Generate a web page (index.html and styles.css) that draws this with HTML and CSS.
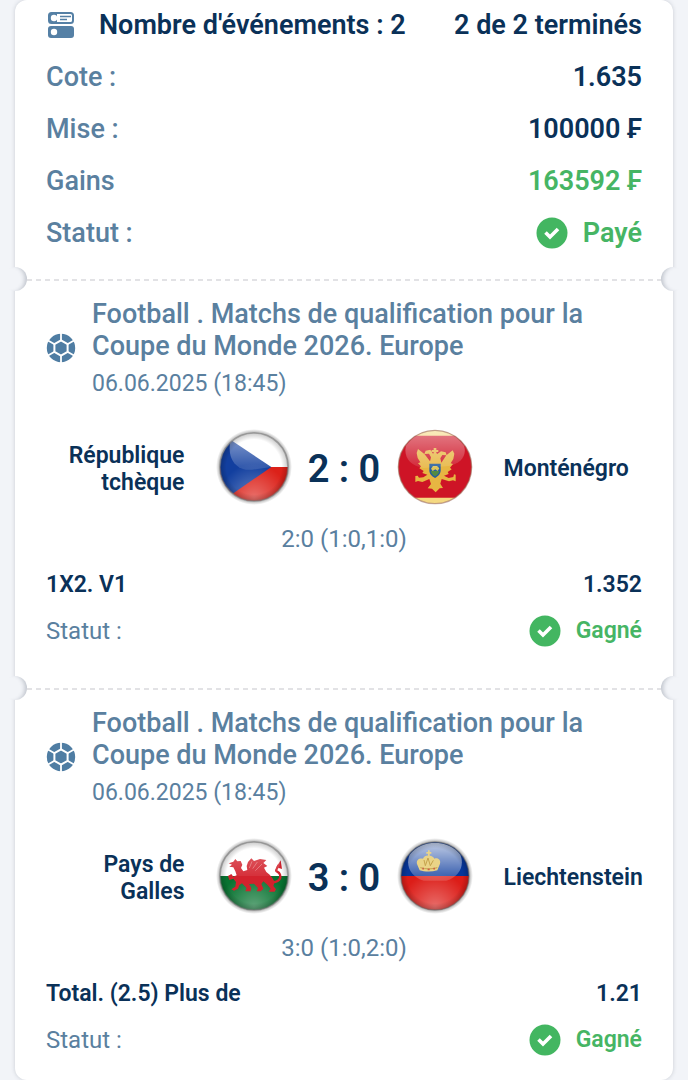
FILE: index.html
```html
<!DOCTYPE html>
<html lang="fr">
<head>
  <meta charset="UTF-8">
  <meta name="viewport" content="width=device-width, initial-scale=1.0">
  <title>Coupon</title>
  <link rel="stylesheet" href="styles.css">
</head>
<body>
  <!-- shared shapes -->
  <svg class="defs" width="0" height="0" aria-hidden="true">
    <defs>
      <linearGradient id="gloss" x1="0" y1="0" x2="0" y2="1">
        <stop offset="0" stop-color="#fff" stop-opacity="0.75"/>
        <stop offset="1" stop-color="#fff" stop-opacity="0.15"/>
      </linearGradient>
      <radialGradient id="shade">
        <stop offset="0.8" stop-color="#000" stop-opacity="0"/>
        <stop offset="1" stop-color="#000" stop-opacity="0.22"/>
      </radialGradient>
      <radialGradient id="halo">
        <stop offset="0.88" stop-color="#555" stop-opacity="0.6"/>
        <stop offset="1" stop-color="#888" stop-opacity="0"/>
      </radialGradient>
      <radialGradient id="glow" cx="0.5" cy="0.95" r="0.5">
        <stop offset="0" stop-color="#fff" stop-opacity="0.35"/>
        <stop offset="1" stop-color="#fff" stop-opacity="0"/>
      </radialGradient>
      <clipPath id="disc"><circle r="102"/></clipPath>
      <clipPath id="disc-lg"><circle r="110"/></clipPath>
      <symbol id="check" viewBox="0 0 32 32">
        <circle cx="16" cy="16" r="15.5" fill="#43b661"/>
        <path d="M9.500 15.500l4.500 4.500 8-8" fill="none" stroke="#fff" stroke-width="3.600"/>
      </symbol>
      <symbol id="ball" viewBox="0 0 30 30">
        <circle cx="15" cy="15" r="14.200" fill="#4f7da3"/>
        <path d="M15 0v8M15 22v8M2 7.500l7 4M21 18.500l7 4M28 7.500l-7 4M9 18.500l-7 4" stroke="#fff" stroke-width="1.800"/>
        <path d="M15 7.400l6.600 3.800v7.600L15 22.600l-6.600-3.800v-7.600z" fill="none" stroke="#fff" stroke-width="2"/>
      </symbol>
    </defs>
  </svg>

  <main class="coupon">
    <section class="summary">
      <div class="row total">
        <svg class="list-icon" viewBox="0 0 26 26" aria-hidden="true">
          <rect x="1" y="1" width="24" height="10" rx="2.500" fill="#fff" stroke="#5580a5" stroke-width="2"/>
          <path d="M1 3a2 2 0 012-2h6v10H3a2 2 0 01-2-2z" fill="#5580a5"/>
          <circle cx="6" cy="6" r="3.200" fill="#fff"/>
          <path d="M12 4.500h11M12 7.500h7" stroke="#5580a5" stroke-width="1.500"/>
          <rect y="14" width="26" height="12" rx="3" fill="#5580a5"/>
          <circle cx="6" cy="20" r="3.200" fill="#fff"/>
        </svg>
        <h1>Nombre d'événements : 2</h1>
        <strong class="value">2 de 2 terminés</strong>
      </div>
      <div class="row"><span class="name">Cote :</span><span class="value">1.635</span></div>
      <div class="row"><span class="name">Mise :</span><span class="value">100000 ₣</span></div>
      <div class="row"><span class="name">Gains</span><span class="value green">163592 ₣</span></div>
      <div class="row">
        <span class="name">Statut :</span>
        <span class="value green status"><svg class="check" aria-hidden="true"><use href="#check"/></svg>Payé</span>
      </div>
    </section>

    <section class="event">
      <header class="event-head">
        <svg class="ball" aria-hidden="true"><use href="#ball"/></svg>
        <div>
          <h2>Football . Matchs de qualification pour la Coupe du Monde 2026. Europe</h2>
          <time datetime="2025-06-06T18:45">06.06.2025 (18:45)</time>
        </div>
      </header>
      <div class="match">
        <span class="team home">République tchèque</span>
        <svg class="flag" viewBox="-114 -114 228 228" aria-hidden="true">
          <circle r="114" fill="url(#halo)"/>
          <g clip-path="url(#disc)">
            <path d="M-110-110h220V0h-220z" fill="#fff"/>
            <path d="M-110 0h220v110h-220z" fill="#dc2119"/>
            <path d="M-110-108L52 0l-162 112z" fill="#123f9f"/>
            <circle r="103" fill="url(#glow)"/>
            <path d="M-72-72C-30-115 30-115 72-72 86-40 76-8 52 0L-6 8C-40 12-80-10-72-72z" fill="url(#gloss)" opacity="0.7"/>
            <circle r="103" fill="url(#shade)"/>
          </g>
          <circle r="102" fill="none" stroke="#777" stroke-opacity="0.55" stroke-width="5"/>
        </svg>
        <strong class="score">2 : 0</strong>
        <svg class="flag" viewBox="-114 -114 228 228" aria-hidden="true">
          <g clip-path="url(#disc-lg)">
            <path d="M-114-114h228v228h-228z" fill="#f5d982"/>
            <path d="M-114-94h228V92h-228z" fill="#ce1426"/>
            <g fill="#e7b642">
              <path d="M-4-57h8v6h6v6H4v8l14-10 14 3 3 9-13-1-6 10 3 13 15-22 19-15 5 10-3 16-8 13 7 2-9 11 5 5-12 8 3 6-14 5 14 7 14-3 2-8 5 1v20l-8-3-12 3-22-7-4 14 8 13-10 1-12 12-11-11-13-1 10-13-5-15-21 9-13-3-8 3v-18l7-1 4 6 13-1 12-8-15-5 4-6-13-8 5-6-9-9 7-3-8-13-3-15 4-12 20 16 16 21 3-12-6-11-14 1 4-10 14-3L-4-37v-8h-6v-6h6z"/>
              <circle cy="-33" r="9"/>
            </g>
            <path d="M-17-10h34v20C17 22 7 30 0 33c-9-4-17-12-17-23z" fill="#265e9d"/>
            <path d="M-13 12h26c-2 9-8 13-13 16-6-3-11-8-13-16z" fill="#548b42"/>
            <path d="M-12 5l6-8H6l7 7-5 8-7-5-8 5z" fill="#dcc55c"/>
            <path d="M-87-64C-40-128 40-128 87-64 97-35 77-9 42-3L-34 3C-75-3-95-29-87-64z" fill="url(#gloss)" opacity="0.62"/>
          </g>
          <circle r="110" fill="none" stroke="#9b6b61" stroke-opacity="0.6" stroke-width="4"/>
        </svg>
        <span class="team">Monténégro</span>
      </div>
      <p class="periods">2:0 (1:0,1:0)</p>
      <div class="row bet"><span>1X2. V1</span><span>1.352</span></div>
      <div class="row result">
        <span>Statut :</span>
        <span class="green status"><svg class="check" aria-hidden="true"><use href="#check"/></svg>Gagné</span>
      </div>
    </section>

    <section class="event">
      <header class="event-head">
        <svg class="ball" aria-hidden="true"><use href="#ball"/></svg>
        <div>
          <h2>Football . Matchs de qualification pour la Coupe du Monde 2026. Europe</h2>
          <time datetime="2025-06-06T18:45">06.06.2025 (18:45)</time>
        </div>
      </header>
      <div class="match">
        <span class="team home">Pays de Galles</span>
        <svg class="flag" viewBox="-114 -114 228 228" aria-hidden="true">
          <circle r="114" fill="url(#halo)"/>
          <g clip-path="url(#disc)">
            <path d="M-110-110h220V0h-220z" fill="#fff"/>
            <path d="M-110 0h220v110h-220z" fill="#087331"/>
            <circle r="103" fill="url(#glow)"/>
            <g transform="translate(-160 -152)">
              <path d="M84 114L98 109 104 101 110 108 120 107 125 118 121 128 128 138 140 134 138 122 142 110 152 99 160 107 178 101 197 104 188 113 200 122 190 127 197 140 207 148 215 158 222 170 218 182 226 192 222 199H204L210 190 200 178 188 168 182 176 188 190 180 198H168L172 188 160 175 145 176 152 188 150 198H134L138 188 124 174 116 180 112 190 100 196 92 192 104 184 106 170 98 160 86 164 82 152 92 146 98 154 108 150 104 138 98 126 86 124 94 118z" fill="#d3222d"/>
              <path d="M205 168c20 8 38-4 33-20-4-13-16-6-10-17l6-12" fill="none" stroke="#d3222d" stroke-width="7"/>
              <path d="M227 126l13-21 4 26z" fill="#d3222d"/>
              <path d="M146 128l8-20M156 130l14-20M164 136l20-20" stroke="#e98a8d" stroke-width="2"/>
            </g>
            <path d="M-72-72C-30-115 30-115 72-72 86-40 76-8 48 0H-44C-80-8-82-40-72-72z" fill="url(#gloss)" opacity="0.45"/>
            <circle r="103" fill="url(#shade)"/>
          </g>
          <circle r="102" fill="none" stroke="#777" stroke-opacity="0.55" stroke-width="5"/>
        </svg>
        <strong class="score">3 : 0</strong>
        <svg class="flag" viewBox="-114 -114 228 228" aria-hidden="true">
          <circle r="114" fill="url(#halo)"/>
          <g clip-path="url(#disc)">
            <path d="M-110-110h220V0h-220z" fill="#06369a"/>
            <path d="M-110 0h220v110h-220z" fill="#dc1d18"/>
            <circle r="103" fill="url(#glow)"/>
            <path d="M-76-64C-40-112 40-112 76-64 90-30 72 4 34 14H-34C-72 4-90-30-76-64z" fill="url(#gloss)"/>
            <path d="M-46-17l-8-19c-3-13 8-19 18-16 3-7 10-10 15-9v-6h-5v-5h5v-5h5v5h5v5h-5v6c7 0 12 4 14 9 12-4 20 5 17 15l-8 20c-17 5-37 5-53 0z" fill="#ead487"/>
            <path d="M-44-25c16 5 34 5 51 0M-33-48l4 17 8-23 7 23 9-16" fill="none" stroke="#c5a24d" stroke-width="3"/>
            <path d="M-38-22h5m11 2h6m11-2h5" stroke="#cd6146" stroke-width="5"/>
            <circle r="103" fill="url(#shade)"/>
          </g>
          <circle r="102" fill="none" stroke="#666" stroke-opacity="0.5" stroke-width="4"/>
        </svg>
        <span class="team">Liechtenstein</span>
      </div>
      <p class="periods">3:0 (1:0,2:0)</p>
      <div class="row bet"><span>Total. (2.5) Plus de</span><span>1.21</span></div>
      <div class="row result">
        <span>Statut :</span>
        <span class="green status"><svg class="check" aria-hidden="true"><use href="#check"/></svg>Gagné</span>
      </div>
    </section>
  </main>
</body>
</html>
```

FILE: styles.css
```css
* {
  box-sizing: border-box;
}
body {
  margin: 0;
  padding: 0 15px;
  background-color: #f2f4f8;
  font-family: Roboto, "Liberation Sans", sans-serif;
  color: #0a3158;
}
h1, h2, p {
  margin: 0;
}
.defs {
  position: absolute;
}
.coupon {
  background-color: #fff;
  border-radius: 12px;
  box-shadow: 0 0 4px rgba(40, 50, 70, 0.2);
}
.summary {
  display: flex;
  flex-direction: column;
  gap: 20px;
  padding: 9px 31px 30px;
  font-size: 27px;
  line-height: 32px;
}
.row {
  display: flex;
  justify-content: space-between;
  align-items: center;
}
.total h1 {
  flex: 1;
  font-size: 27px;
  font-weight: 600;
}
.list-icon {
  width: 26px;
  height: 26px;
  margin: 0 25px 0 2px;
}
.name {
  color: #5a809f;
  font-weight: 500;
}
.value {
  font-weight: 600;
}
.green {
  color: #46b564;
}
.status {
  display: flex;
  align-items: center;
  gap: 15px;
}
.check {
  width: 32px;
  height: 32px;
}

/* ticket stub with a notch on each side */
.event {
  position: relative;
  padding: 19px 31px 43px;
  background: repeating-linear-gradient(90deg, #e2e2e5 0 5px, transparent 5px 9px) 12px 0 / calc(100% - 24px) 2px no-repeat;
  font-size: 23px;
  line-height: 28px;
}
.event:last-child {
  padding-bottom: 26px;
}
.event::before,
.event::after {
  content: "";
  position: absolute;
  top: -12px;
  width: 24px;
  height: 24px;
  border-radius: 50%;
  background-color: #f2f4f8;
}
.event::before {
  left: -12px;
  box-shadow: inset -5px 0 4px -3px rgba(40, 50, 70, 0.25);
}
.event::after {
  right: -12px;
  box-shadow: inset 5px 0 4px -3px rgba(40, 50, 70, 0.25);
}
.event-head {
  display: flex;
  align-items: center;
  gap: 16px;
  color: #5a809f;
}
.event-head h2 {
  margin-bottom: 8px;
  font-size: 27px;
  font-weight: 500;
  line-height: 32px;
}
.event-head time {
  display: block;
}
.ball {
  flex: none;
  width: 30px;
  height: 30px;
}
.match {
  display: grid;
  grid-template-columns: minmax(0, 1fr) 76px 105px 76px minmax(0, 1fr);
  align-items: center;
  margin: 31px 0 20px;
}
.flag {
  width: 76px;
  height: 76px;
}
.team {
  padding: 3px 0 0 31px;
  font-weight: 600;
  line-height: 27px;
}
.home {
  padding: 3px 31px 0 0;
  text-align: right;
}
.score {
  padding-top: 3px;
  font-size: 38px;
  font-weight: 600;
  text-align: center;
}
.periods {
  color: #5a809f;
  font-size: 24px;
  text-align: center;
}
.bet {
  margin: 18px 0;
  font-weight: 600;
}
.result {
  height: 28px;
  color: #5a809f;
  font-size: 24px;
}
.result .status {
  font-size: 23px;
  font-weight: 600;
}
```
